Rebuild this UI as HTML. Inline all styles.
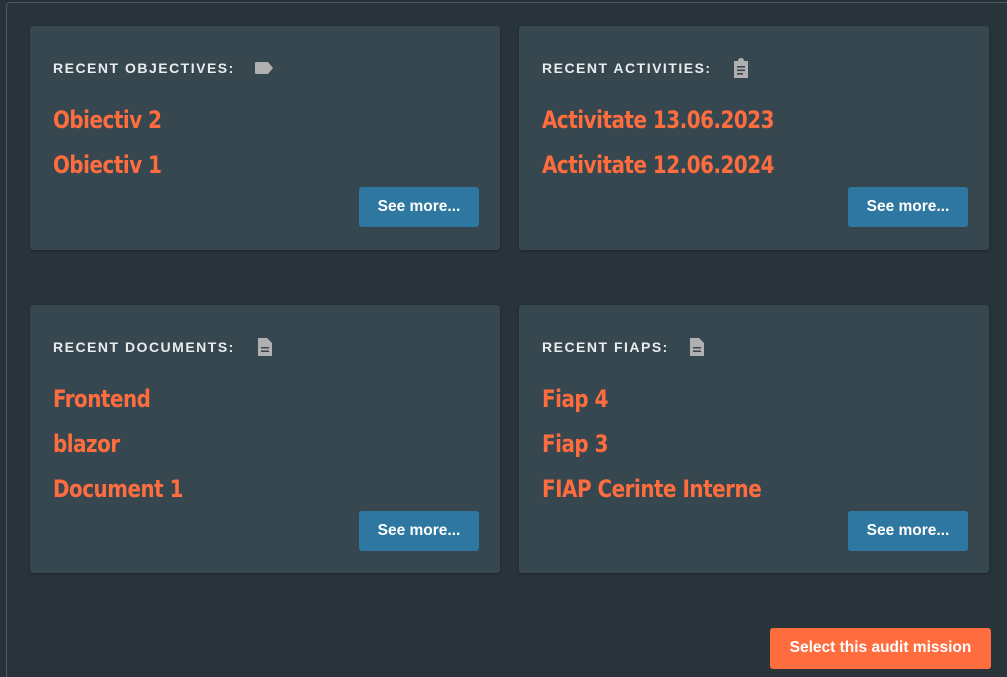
<!DOCTYPE html>
<html style="overflow:hidden;height:677px"><head><style>
body{margin:0;width:1007px;height:677px;background:#263238;overflow:hidden;font-family:"Liberation Sans",sans-serif;position:relative}
.frame{position:absolute;left:6px;top:2px;width:1010px;height:700px;border:1px solid #4a5a62;border-radius:4px;background:#28333a}
.card{position:absolute;width:470px;background:#37474f;border-radius:3px;box-shadow:0 1px 2px rgba(0,0,0,.3)}
.t{position:absolute;left:23px;top:33px;height:18px;line-height:18px;color:#e8ecee;font-weight:bold;font-size:14px;letter-spacing:1.5px;white-space:nowrap}
.t svg{position:absolute;top:50%;transform:translateY(-50%)}
.l{position:absolute;left:23px;color:#ff6d3f;font-size:24px;font-family:"DejaVu Sans Condensed","Liberation Sans",sans-serif;font-weight:bold;letter-spacing:-0.5px;transform:scaleX(0.92);transform-origin:left}
.b{position:absolute;right:21px;width:120px;height:40px;background:#2d77a0;border-radius:3px;color:#fff;font-weight:bold;font-size:15.5px;text-align:center;line-height:40px}
.sel{position:absolute;left:770px;top:628px;width:221px;height:41px;background:#ff6d3f;border-radius:3px;color:#fff;font-weight:bold;font-size:15.5px;text-align:center;line-height:40px}
</style></head><body>
<div class="frame"></div>
<div class="card" style="left:30px;top:26px;height:224px">
<div class="t">RECENT OBJECTIVES:<svg style="left:202px" width="18" height="12" viewBox="0 0 18 12"><path d="M1 0H13L18 6L13 12H1Q0 12 0 11V1Q0 0 1 0Z" fill="#b0b0b0"/></svg></div>
<div class="l" style="top:80px">Obiectiv 2</div><div class="l" style="top:125px">Obiectiv 1</div>
<div class="b" style="top:161px">See more...</div></div>
<div class="card" style="left:519px;top:26px;height:224px">
<div class="t">RECENT ACTIVITIES:<svg style="left:191px" width="16" height="20" viewBox="0 0 16 20"><path d="M1 3H5Q5 0 8 0Q11 0 11 3H15V20H1Z" fill="#b0b0b0"/><rect x="4" y="8" width="8" height="1.6" fill="#37474f"/><rect x="4" y="11.5" width="8" height="1.6" fill="#37474f"/><rect x="4" y="15" width="6" height="1.6" fill="#37474f"/></svg></div>
<div class="l" style="top:80px">Activitate 13.06.2023</div><div class="l" style="top:125px">Activitate 12.06.2024</div>
<div class="b" style="top:161px">See more...</div></div>
<div class="card" style="left:30px;top:305px;height:268px">
<div class="t">RECENT DOCUMENTS:<svg style="left:205px" width="14" height="18" viewBox="0 0 14 18"><path d="M0 0H9L14 5V18H0Z" fill="#b0b0b0"/><rect x="3" y="9" width="8" height="1.5" fill="#37474f"/><rect x="3" y="12.5" width="8" height="1.5" fill="#37474f"/></svg></div>
<div class="l" style="top:80px">Frontend</div><div class="l" style="top:125px">blazor</div><div class="l" style="top:170px">Document 1</div>
<div class="b" style="top:206px">See more...</div></div>
<div class="card" style="left:519px;top:305px;height:268px">
<div class="t">RECENT FIAPS:<svg style="left:148px" width="14" height="18" viewBox="0 0 14 18"><path d="M0 0H9L14 5V18H0Z" fill="#b0b0b0"/><rect x="3" y="9" width="8" height="1.5" fill="#37474f"/><rect x="3" y="12.5" width="8" height="1.5" fill="#37474f"/></svg></div>
<div class="l" style="top:80px">Fiap 4</div><div class="l" style="top:125px">Fiap 3</div><div class="l" style="top:170px">FIAP Cerinte Interne</div>
<div class="b" style="top:206px">See more...</div></div>
<div class="sel">Select this audit mission</div>
</body></html>
